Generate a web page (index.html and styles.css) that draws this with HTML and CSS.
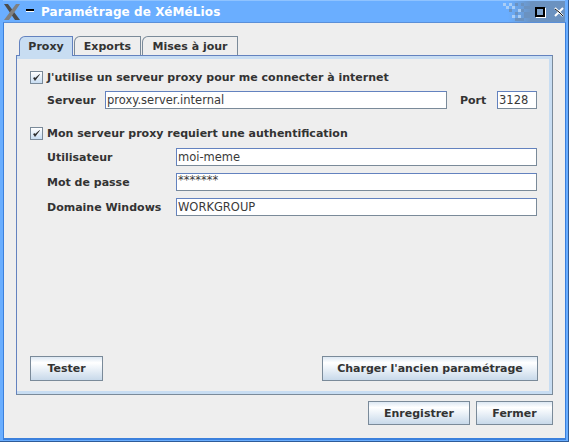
FILE: index.html
```html
<!DOCTYPE html>
<html lang="fr">
<head>
    <meta charset="UTF-8">
    <title>Paramétrage de XéMéLios</title>
    <link rel="stylesheet" href="styles.css">
</head>
<body>
    <div class="window">
        <div class="titlebar">
            <svg class="wm-logo" width="18" height="18" viewBox="0 0 18 18">
                <polygon points="1,1 5,1 17,17 12,17" fill="#4c4c4c"/>
                <polygon points="13,1 17,1 6,17 1,17" fill="#808080"/>
            </svg>
            <span class="wm-min"></span>
            <span class="title">Paramétrage de XéMéLios</span>
            <svg class="dither" width="27" height="19" viewBox="0 0 27 19">
                <g fill="#a9cdf5">
                    <rect x="0" y="1" width="3" height="3"/><rect x="6" y="1" width="3" height="3"/>
                    <rect x="3" y="4" width="3" height="3"/><rect x="9" y="4" width="3" height="3"/>
                    <rect x="15" y="7" width="3" height="3"/><rect x="9" y="13" width="3" height="3"/>
                    <rect x="15" y="13" width="3" height="3"/>
                </g>
                <g fill="#6b92c0">
                    <rect x="12" y="1" width="3" height="3"/><rect x="6" y="7" width="3" height="3"/>
                    <rect x="18" y="1" width="3" height="3"/><rect x="18" y="7" width="3" height="3"/>
                    <rect x="12" y="10" width="3" height="3"/><rect x="21" y="4" width="6" height="3"/>
                    <rect x="21" y="10" width="6" height="3"/><rect x="21" y="13" width="6" height="3"/>
                    <rect x="12" y="16" width="9" height="3"/>
                </g>
            </svg>
            <div class="wm-buttons">
                <span class="wm-max"></span>
                <svg width="10" height="10" viewBox="0 0 10 10">
                    <path d="M1 1 L9 9 M9 1 L1 9" stroke="#fff" stroke-width="2"/>
                    <path d="M1 2 L5 5 L9 9" stroke="#111" stroke-width="1" fill="none"/>
                </svg>
            </div>
        </div>

        <div class="client">
            <div class="tabs">
                <div class="tab tab-proxy tab-active">Proxy</div>
                <div class="tab tab-exports">Exports</div>
                <div class="tab tab-updates">Mises à jour</div>
            </div>

            <div class="panel">
                <label class="check-row">
                    <span class="checkbox">
                        <svg width="9" height="9" viewBox="0 0 9 9"><path d="M1.5 5 L3 7.5 L7.5 1.5 L3 5.5 L2.5 4.5 Z" fill="#222" stroke="#222" stroke-width="0.6"/></svg>
                    </span>
                    J'utilise un serveur proxy pour me connecter à internet
                </label>
                <div class="server-row">
                    <span class="server-label">Serveur</span>
                    <input class="field field-server" type="text" value="proxy.server.internal">
                    <span class="port-label">Port</span>
                    <input class="field field-port" type="text" value="3128">
                </div>

                <label class="check-row check-auth">
                    <span class="checkbox">
                        <svg width="9" height="9" viewBox="0 0 9 9"><path d="M1.5 5 L3 7.5 L7.5 1.5 L3 5.5 L2.5 4.5 Z" fill="#222" stroke="#222" stroke-width="0.6"/></svg>
                    </span>
                    Mon serveur proxy requiert une authentification
                </label>
                <div class="auth-grid">
                    <span>Utilisateur</span>
                    <input class="field" type="text" value="moi-meme">
                    <span>Mot de passe</span>
                    <input class="field field-pass" type="text" value="*******">
                    <span>Domaine Windows</span>
                    <input class="field" type="text" value="WORKGROUP">
                </div>

                <div class="panel-actions">
                    <button class="btn btn-test">Tester</button>
                    <button class="btn btn-load">Charger l'ancien paramétrage</button>
                </div>
            </div>

            <div class="footer">
                <button class="btn btn-save">Enregistrer</button>
                <button class="btn btn-close">Fermer</button>
            </div>
        </div>
    </div>
</body>
</html>
```
FILE: styles.css
```css
html, body {
    margin: 0;
    padding: 0;
}
body {
    width: 569px;
    height: 442px;
    overflow: hidden;
    font-family: "DejaVu Sans", sans-serif;
    font-size: 11px;
    font-weight: bold;
    color: #333;
}
.window {
    width: 569px;
    height: 442px;
    box-sizing: border-box;
    display: flex;
    flex-direction: column;
    background-color: #6aaeff;
    border-bottom: 1px solid #2e5c99;
    border-right: 1px solid #2e5c99;
    padding: 0 2px 0 3px;
}
.titlebar {
    height: 22px;
    flex: none;
    display: flex;
    align-items: center;
    box-sizing: border-box;
    margin-right: 1px;
    border-top: 1px solid #8fc3ff;
    background: linear-gradient(to right, #6aaeff 0, #6aaeff 505px, #6b92c0 530px);
}
.wm-logo {
    flex: none;
    margin-left: 0;
}
.wm-min {
    flex: none;
    width: 8px;
    height: 2px;
    margin: 0 0 4px 5px;
    background-color: #000;
    box-shadow: 0 1px 0 #fff;
}
.title {
    margin-left: 7px;
    color: #fff;
    font-size: 12px;
    letter-spacing: 0.1px;
    white-space: nowrap;
}
.dither {
    flex: none;
    margin-left: auto;
}
.wm-buttons {
    flex: none;
    display: flex;
    align-items: center;
    gap: 9px;
    width: 35px;
    box-sizing: border-box;
    padding-left: 5px;
    background-color: #6b92c0;
    height: 20px;
}
.wm-max {
    width: 6px;
    height: 6px;
    border: 2px solid #000;
    background-color: #7fa3cc;
    box-shadow: 1px 1px 0 #fff;
}
.client {
    flex: 1;
    min-height: 0;
    display: flex;
    flex-direction: column;
    box-sizing: border-box;
    background-color: #eee;
    border-left: 1px solid #3b80dc;
    border-top: 1px solid #5a8fd8;
    border-right: 1px solid #3b80dc;
    border-bottom: 2px solid #3b80dc;
    margin-bottom: 1px;
    padding: 13px 12px 13px 12px;
}
.tabs {
    display: flex;
    flex: none;
    height: 19px;
    padding-left: 3px;
    gap: 1px;
}
.tab {
    box-sizing: border-box;
    height: 19px;
    padding-top: 3px;
    border: 1px solid #7a8a99;
    border-bottom: none;
    border-top-left-radius: 6px;
    background-color: #eee;
    text-align: center;
    white-space: nowrap;
}
.tab-proxy {
    width: 54px;
}
.tab-exports {
    width: 67px;
}
.tab-updates {
    width: 96px;
}
.tab-active {
    border-color: #6382bf;
    background-color: #c8ddf2;
    position: relative;
    z-index: 1;
    height: 20px;
}
.panel {
    flex: 1;
    min-height: 0;
    display: flex;
    flex-direction: column;
    box-sizing: border-box;
    background-color: #eee;
    border: 1px solid #6382bf;
    border-bottom-color: #7a8a99;
    border-right-color: #7a8a99;
    box-shadow: inset 0 3px 0 #c8ddf2, inset -3px 0 0 #c8ddf2, inset 0 -3px 0 #c8ddf2;
    padding: 15px 14px 13px 13px;
}
.check-row {
    display: flex;
    align-items: center;
    gap: 4px;
    height: 13px;
    white-space: nowrap;
}
.checkbox {
    flex: none;
    width: 13px;
    height: 13px;
    box-sizing: border-box;
    display: flex;
    align-items: center;
    justify-content: center;
    border: 1px solid #7a8a99;
    background: linear-gradient(to bottom, #fff, #c8ddf2);
}
.check-auth {
    margin-top: 18px;
}
.field {
    box-sizing: border-box;
    height: 18px;
    margin: 0;
    padding: 0 1px;
    border: 1px solid #7a8a99;
    border-top-color: #6382bf;
    border-left-color: #6382bf;
    background-color: #fff;
    font-family: "DejaVu Sans", sans-serif;
    font-size: 11.5px;
    font-weight: normal;
    color: #3a3a3a;
    outline: none;
    min-width: 0;
}
.server-row {
    display: flex;
    align-items: center;
    margin-top: 7px;
}
.server-label {
    width: 58px;
    padding-left: 17px;
    box-sizing: content-box;
    flex: none;
}
.field-server {
    width: 342px;
    flex: none;
}
.port-label {
    margin-left: 13px;
    width: 37px;
    flex: none;
}
.field-port {
    width: 40px;
    flex: none;
}
.auth-grid {
    display: grid;
    grid-template-columns: 129px 361px;
    grid-auto-rows: 18px;
    row-gap: 7px;
    align-items: center;
    margin-top: 8px;
    padding-left: 17px;
}
.field-pass {
    padding-bottom: 4px;
}
.panel-actions {
    margin-top: auto;
    display: flex;
    justify-content: space-between;
    align-items: flex-end;
}
.btn {
    box-sizing: border-box;
    height: 25px;
    padding: 0;
    border: 1px solid #7a8a99;
    background: linear-gradient(to bottom, #dde8f3 0, #fff 25%, #f0f5fa 45%, #c8d9ea 100%);
    font-family: "DejaVu Sans", sans-serif;
    font-size: 11px;
    font-weight: bold;
    color: #333;
}
.btn-test {
    width: 73px;
}
.btn-load {
    width: 216px;
}
.footer {
    flex: none;
    display: flex;
    justify-content: flex-end;
    gap: 6px;
    margin-top: 6px;
}
.footer .btn {
    height: 24px;
}
.btn-save {
    width: 102px;
}
.btn-close {
    width: 77px;
}
```
